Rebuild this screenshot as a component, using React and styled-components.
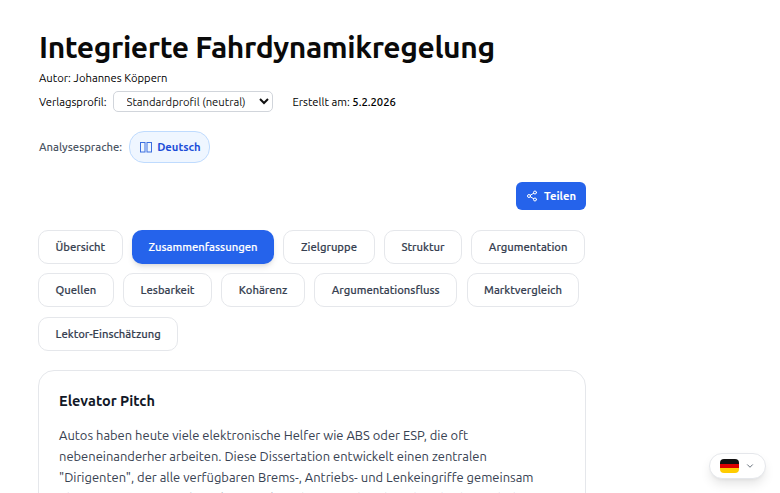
import React from 'react'
import styled, { createGlobalStyle } from 'styled-components'

const tabs = [
  'Übersicht', 'Zusammenfassungen', 'Zielgruppe', 'Struktur', 'Argumentation',
  'Quellen', 'Lesbarkeit', 'Kohärenz', 'Argumentationsfluss', 'Marktvergleich',
  'Lektor-Einschätzung',
]

const GlobalStyle = createGlobalStyle`
  html, body {
    margin: 0;
    height: 100%;
    overflow: hidden;
    background: #fff;
  }
  body {
    font-family: Ubuntu, "Noto Sans", "Open Sans", sans-serif;
    color: #000;
  }
`

const Page = styled.div`
  width: 548px;
  margin-left: 38px;
  padding-top: 29px;
`

const Header = styled.header`
  padding-left: 1px;
`

const Title = styled.h1`
  margin: 0;
  font-size: 30px;
  line-height: 36px;
  font-weight: 700;
  letter-spacing: -0.4px;
  color: #0a0a0a;
`

const Author = styled.p`
  margin: 5px 0 0;
  font-size: 11.25px;
  line-height: 16px;
`

const MetaRow = styled.div`
  display: flex;
  align-items: center;
  margin-top: 5px;
  font-size: 11.25px;
  line-height: 16px;
`

const ProfileSelect = styled.select`
  margin-left: 6px;
  width: 160px;
  height: 21px;
  padding: 0 4px 0 9px;
  border: 1px solid #d1d5db;
  border-radius: 5px;
  background: #fff;
  color: #111;
  font: inherit;
`

const Created = styled.span`
  margin-left: 20px;
  b { font-weight: 500; }
`

const LanguageRow = styled.div`
  display: flex;
  align-items: center;
  gap: 7px;
  margin-top: 19px;
`

const LanguageLabel = styled.span`
  font-size: 11.25px;
  font-weight: 500;
  color: #4b5563;
`

const LanguagePill = styled.div`
  display: flex;
  align-items: center;
  gap: 5px;
  height: 30px;
  padding: 0 8px 0 10px;
  border: 1px solid #bfdbfe;
  border-radius: 15px;
  background: #eff6ff;
  color: #1d4ed8;
  font-size: 11.25px;
  font-weight: 700;
`

const ShareRow = styled.div`
  display: flex;
  justify-content: flex-end;
  margin-top: 19px;
`

const ShareButton = styled.button`
  display: flex;
  align-items: center;
  gap: 6px;
  height: 28px;
  padding: 0 10px;
  border: 0;
  border-radius: 6px;
  background: #2563eb;
  color: #fff;
  font: inherit;
  font-size: 11.25px;
  font-weight: 700;
`

const Tabs = styled.div`
  display: flex;
  flex-wrap: wrap;
  gap: 9.4px;
  margin-top: 20px;
`

const Tab = styled.button`
  height: 34px;
  padding: 0 16.5px;
  border: ${p => (p.$active ? '0' : '1px solid #e5e7eb')};
  border-radius: 10px;
  background: ${p => (p.$active ? '#2563eb' : '#fff')};
  color: ${p => (p.$active ? '#fff' : '#374151')};
  font: inherit;
  font-size: 11.25px;
  font-weight: 500;
  -webkit-text-stroke: 0.15px currentColor;
  box-shadow: ${p => (p.$active ? '0 4px 6px -1px rgba(0,0,0,.1), 0 2px 4px -2px rgba(0,0,0,.1)' : 'none')};
`

const Card = styled.section`
  margin-top: 19px;
  padding: 20px 22px 20px 20px;
  border: 1px solid #e5e7eb;
  border-radius: 16px;
  background: #fff;
`

const CardTitle = styled.h2`
  margin: 0;
  font-size: 14.5px;
  line-height: 20px;
  font-weight: 700;
  color: #111827;
`

const CardText = styled.p`
  margin: 14px 0 0;
  font-size: 12.95px;
  line-height: 21px;
  color: #374151;
`

const LanguageSwitch = styled.button`
  position: fixed;
  right: 14px;
  bottom: 14px;
  display: flex;
  align-items: center;
  gap: 6px;
  height: 26px;
  padding: 0 10px;
  border: 1px solid #e5e7eb;
  border-radius: 13px;
  background: #fff;
  box-shadow: 0 6px 12px -2px rgba(0,0,0,.12), 0 2px 4px -2px rgba(0,0,0,.08);
`

const Flag = styled.span`
  display: block;
  width: 19px;
  height: 14px;
  border-radius: 4px;
  background: linear-gradient(#111 0 33%, #d00 33% 66%, #fc0 66%);
`

const BookIcon = () => (
  <svg width="12" height="12" viewBox="0 0 12 12" fill="none" stroke="#3b6fe0" strokeWidth="1">
    <rect x="0.5" y="1.5" width="4.5" height="9.5" />
    <rect x="7" y="1.5" width="4.5" height="9.5" />
  </svg>
)

const ShareIcon = () => (
  <svg width="12" height="12" viewBox="0 0 24 24" fill="none" stroke="currentColor" strokeWidth="2" strokeLinecap="round">
    <circle cx="18" cy="5" r="3" />
    <circle cx="6" cy="12" r="3" />
    <circle cx="18" cy="19" r="3" />
    <path d="M8.6 13.5l6.8 4M15.4 6.5l-6.8 4" />
  </svg>
)

const Chevron = () => (
  <svg width="10" height="10" viewBox="0 0 24 24" fill="none" stroke="#4b5563" strokeWidth="2" strokeLinecap="round" strokeLinejoin="round">
    <path d="M6 9l6 6 6-6" />
  </svg>
)

export default function App() {
  return (
    <>
      <GlobalStyle />
      <Page>
        <Header>
          <Title>Integrierte Fahrdynamikregelung</Title>
          <Author>Autor: Johannes Köppern</Author>
          <MetaRow>
            Verlagsprofil:
            <ProfileSelect defaultValue="neutral">
              <option value="neutral">Standardprofil (neutral)</option>
            </ProfileSelect>
            <Created>Erstellt am: <b>5.2.2026</b></Created>
          </MetaRow>
          <LanguageRow>
            <LanguageLabel>Analysesprache:</LanguageLabel>
            <LanguagePill><BookIcon />Deutsch</LanguagePill>
          </LanguageRow>
        </Header>
        <ShareRow>
          <ShareButton><ShareIcon />Teilen</ShareButton>
        </ShareRow>
        <Tabs>
          {tabs.map(t => <Tab key={t} $active={t === 'Zusammenfassungen'}>{t}</Tab>)}
        </Tabs>
        <Card>
          <CardTitle>Elevator Pitch</CardTitle>
          <CardText>
            Autos haben heute viele elektronische Helfer wie ABS oder ESP, die oft
            nebeneinanderher arbeiten. Diese Dissertation entwickelt einen zentralen
            "Dirigenten", der alle verfügbaren Brems-, Antriebs- und Lenkeingriffe gemeinsam
            über ein einziges Regelungskonzept koordiniert und so die Fahrsicherheit erhöht.
          </CardText>
        </Card>
      </Page>
      <LanguageSwitch aria-label="Sprache"><Flag /><Chevron /></LanguageSwitch>
    </>
  )
}
